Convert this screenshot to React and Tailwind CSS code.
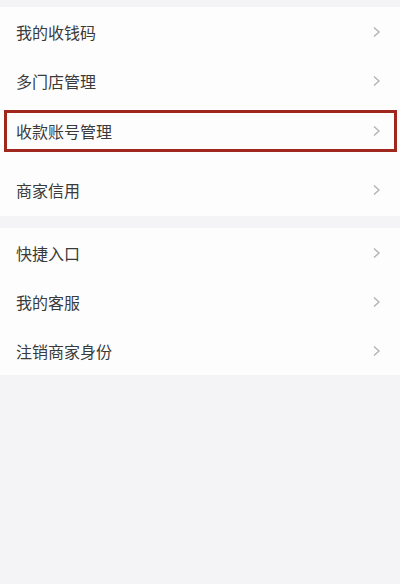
import React from 'react';

const Chevron = () => (
  <svg width="9" height="12" viewBox="0 0 9 12" fill="none" className="shrink-0">
    <path d="M2 1.5 L7 6 L2 10.5" stroke="#b3b3b6" strokeWidth="1.4" />
  </svg>
);

const Row = ({ label, className = '' }) => (
  <div className={`flex h-[49px] items-center justify-between pl-4 pr-[19px] ${className}`}>
    <span className="text-[16px] leading-none text-[#3a3a3a]">{label}</span>
    <Chevron />
  </div>
);

export default function App() {
  return (
    <div
      className="h-[584px] w-[400px] overflow-hidden bg-[#f4f4f6]"
      style={{ fontFamily: '"Noto Sans CJK SC", "Noto Sans", sans-serif' }}
    >
      <div className="h-[7px]" />
      <div className="bg-[#fdfdfe]">
        <Row label="我的收钱码" />
        <Row label="多门店管理" />
        <div className="flex h-[59px] flex-col pt-[5px]">
          <div className="ml-[4px] mr-[3px] flex h-[42px] items-center justify-between border-[3px] border-[#a0271d] pl-[9px] pr-[13px]">
            <span className="text-[16px] leading-none text-[#3a3a3a]">收款账号管理</span>
            <Chevron />
          </div>
        </div>
        <Row label="商家信用" className="h-[52px]" />
      </div>
      <div className="h-[12px]" />
      <div className="bg-[#fdfdfe]">
        <Row label="快捷入口" />
        <Row label="我的客服" />
        <Row label="注销商家身份" />
      </div>
    </div>
  );
}
